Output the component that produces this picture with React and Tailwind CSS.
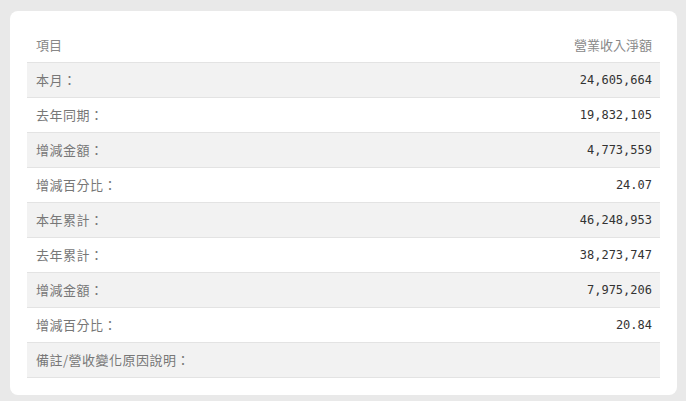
import React from 'react';

const rows = [
    { label: '本月：', value: '24,605,664' },
    { label: '去年同期：', value: '19,832,105' },
    { label: '增減金額：', value: '4,773,559' },
    { label: '增減百分比：', value: '24.07' },
    { label: '本年累計：', value: '46,248,953' },
    { label: '去年累計：', value: '38,273,747' },
    { label: '增減金額：', value: '7,975,206' },
    { label: '增減百分比：', value: '20.84' },
    { label: '備註/營收變化原因說明：', value: '' },
];

const App = () => {
    return (
        <div className="w-[686px] h-[401px] bg-[#e9e9e9] pl-[10px] pr-[9px] pt-[11px] pb-[6px]">
            <div
                className="h-full bg-white rounded-lg px-[17px] pt-[17px]"
                style={{ fontFamily: '"Noto Sans CJK TC", "Noto Sans", sans-serif' }}
            >
                <div className="flex items-center justify-between h-[35px] pl-[9px] pr-[8px] text-[13px] text-[#888] border-b border-[#e3e3e3]">
                    <span>項目</span>
                    <span>營業收入淨額</span>
                </div>
                {rows.map((row, idx) => (
                    <div
                        key={idx}
                        className={`flex items-center justify-between h-[35px] pl-[9px] pr-[8px] border-b border-[#e3e3e3] ${idx % 2 === 0 ? 'bg-[#f2f2f2]' : 'bg-white'}`}
                    >
                        <span className="text-[13px] text-[#777] tracking-[0.5px]">{row.label}</span>
                        <span
                            className="text-[12px] text-[#333]"
                            style={{ fontFamily: '"DejaVu Sans Mono", "Liberation Mono", monospace' }}
                        >
                            {row.value}
                        </span>
                    </div>
                ))}
            </div>
        </div>
    );
};

export default App;
